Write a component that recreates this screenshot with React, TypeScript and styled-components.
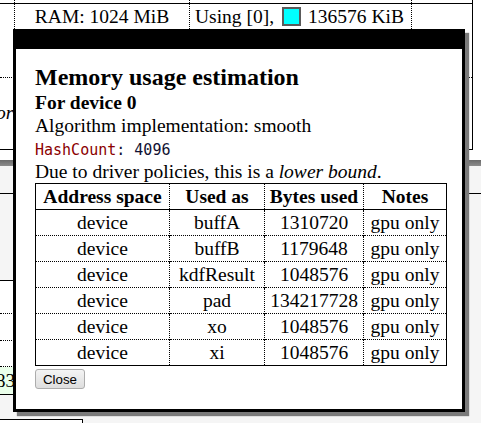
import React from 'react';
import styled, { createGlobalStyle } from 'styled-components';

const Global = createGlobalStyle`
  html, body { margin: 0; padding: 0; background: #fff; }
  body {
    font-family: "Liberation Serif", "Times New Roman", serif;
    font-size: 19.5px;
    color: #000;
    overflow: hidden;
  }
`;

const Page = styled.div`
  position: relative;
  width: 481px;
  height: 423px;
  overflow: hidden;
  background: #f5f5f5;
`;

const TopArea = styled.div`
  background: #fff;
  padding-bottom: 10px;
`;

const TopTable = styled.div`
  width: 472px;
  border-right: 1px solid #000;
  border-bottom: 1px solid #000;
`;

const Row = styled.div<{ $h: number; $bottom?: 'solid' | 'dotted' | 'none' }>`
  display: grid;
  grid-template-columns: 15px 175px 222px 1fr;
  height: ${(p) => p.$h}px;
  border-bottom: ${(p) => (p.$bottom === 'none' || !p.$bottom ? '0' : `1px ${p.$bottom} #000`)};
  line-height: 25px;
  white-space: nowrap;
`;

const Cell = styled.div<{ $align?: string; $last?: boolean }>`
  border-right: ${(p) => (p.$last ? '0' : '1px dotted #000')};
  text-align: ${(p) => p.$align || 'left'};
  padding: 0 5px;
  overflow: hidden;
  display: flex;
  align-items: center;
  justify-content: ${(p) => (p.$align === 'center' ? 'center' : 'flex-start')};
  gap: 7px;
`;

const WideCell = styled.div`
  grid-column: 1 / -1;
  padding-top: 22px;
  padding-left: 0;
  font-style: italic;
  text-indent: -4px;
`;

const Swatch = styled.span`
  display: inline-block;
  width: 15px;
  height: 15px;
  margin-left: 1px;
  background: #00ffff;
  border: 2px solid #5a5a5a;
`;

const Band = styled.div`
  height: 6px;
  background: linear-gradient(#6a6a6a, #8c8c8c);
`;

const Gray = styled.div<{ $h: number; $line?: boolean }>`
  height: ${(p) => p.$h}px;
  border-bottom: ${(p) => (p.$line ? '1px solid #000' : '0')};
`;

const LowerTable = styled.div`
  width: 300px;
  background: #fff;
  border-top: 1px solid #000;
  border-bottom: 1px solid #000;
  border-right: 1px solid #000;
`;

const LowerRow = styled.div<{ $h: number; $green?: boolean; $last?: boolean }>`
  height: ${(p) => p.$h}px;
  border-bottom: ${(p) => (p.$last ? '0' : '1px dotted #000')};
  background: ${(p) => (p.$green ? '#eaffea' : '#fff')};
  line-height: ${(p) => p.$h}px;
  text-indent: -14px;
  white-space: nowrap;
`;

const FootBox = styled.div`
  margin-top: 24px;
  width: 82px;
  height: 20px;
  border-top: 1px solid #000;
  border-right: 1px solid #000;
  background: #fff;
`;

const Overlay = styled.div`
  position: absolute;
  left: 13px;
  top: 29px;
  width: 452px;
  box-sizing: border-box;
  background: #fff;
  border: 3px solid #000;
  border-top: 0;
  box-shadow: 4px 4px 1px #7a7a7a;
`;

const TitleBar = styled.div`
  height: 20px;
  background: #000;
`;

const Body = styled.div`
  padding: 15px 20px 20px 19px;
`;

const Title = styled.h2`
  margin: 0;
  font-size: 24px;
  font-weight: bold;
  line-height: 27px;
`;

const Sub = styled.h3`
  margin: 0;
  font-size: 19.5px;
  font-weight: bold;
  line-height: 23px;
`;

const Para = styled.div<{ $lh: number }>`
  line-height: ${(p) => p.$lh}px;
`;

const Code = styled.span<{ $c: string }>`
  font-family: "DejaVu Sans Mono", "Liberation Mono", monospace;
  font-size: 15px;
  color: ${(p) => p.$c};
`;

const Table = styled.table`
  margin-top: 0;
  width: 100%;
  border-collapse: collapse;
  border: 1px solid #000;
  table-layout: fixed;
`;

const Th = styled.th<{ $w: number }>`
  width: ${(p) => p.$w}px;
  height: 25px;
  padding: 0;
  font-weight: bold;
  text-align: center;
  border-left: 1px dotted #000;
  border-bottom: 1px solid #000;
  line-height: 22px;
  white-space: nowrap;
`;

const Td = styled.td`
  height: 25px;
  padding: 0;
  text-align: center;
  border-left: 1px dotted #000;
  border-top: 1px dotted #000;
  line-height: 22px;
  white-space: nowrap;
`;

const CloseButton = styled.button`
  margin-top: 3px;
  width: 50px;
  height: 20px;
  padding: 0;
  font-family: "Liberation Sans", Arial, sans-serif;
  font-size: 13.3px;
  color: #000;
  background: linear-gradient(#f4f4f4, #dedede);
  border: 1px solid #acacac;
  border-radius: 3px;
  display: block;
`;

const rows = [
  ['device', 'buffA', '1310720', 'gpu only'],
  ['device', 'buffB', '1179648', 'gpu only'],
  ['device', 'kdfResult', '1048576', 'gpu only'],
  ['device', 'pad', '134217728', 'gpu only'],
  ['device', 'xo', '1048576', 'gpu only'],
  ['device', 'xi', '1048576', 'gpu only'],
];

export default function App() {
  return (
    <Page>
      <Global />
      <TopArea>
        <TopTable>
          <Row $h={3} $bottom="solid">
            <Cell />
            <Cell />
            <Cell />
            <Cell $last />
          </Row>
          <Row $h={25} $bottom="none">
            <Cell />
            <Cell $align="center">RAM: 1024 MiB</Cell>
            <Cell>
              Using [0], <Swatch /> 136576 KiB
            </Cell>
            <Cell $last />
          </Row>
          <Row $h={48} $bottom="dotted">
            <Cell $last />
          </Row>
          <Row $h={71} $bottom="none">
            <WideCell>or</WideCell>
          </Row>
        </TopTable>
      </TopArea>
      <Band />
      <Gray $h={27} $line />
      <Gray $h={86} />
      <LowerTable>
        <LowerRow $h={32} />
        <LowerRow $h={26} />
        <LowerRow $h={25} />
        <LowerRow $h={27} $green $last>
          1833
        </LowerRow>
      </LowerTable>
      <FootBox />

      <Overlay>
        <TitleBar />
        <Body>
          <Title>Memory usage estimation</Title>
          <Sub>For device 0</Sub>
          <Para $lh={24}>Algorithm implementation: smooth</Para>
          <Para $lh={21}>
            <Code $c="#8b0000">HashCount</Code>
            <Code $c="#111133">: 4096</Code>
          </Para>
          <Para $lh={22}>
            Due to driver policies, this is a <i>lower bound</i>.
          </Para>
          <Table>
            <thead>
              <tr>
                <Th $w={133}>Address space</Th>
                <Th $w={94}>Used as</Th>
                <Th $w={98}>Bytes used</Th>
                <Th $w={82}>Notes</Th>
              </tr>
            </thead>
            <tbody>
              {rows.map((r, i) => (
                <tr key={i}>
                  {r.map((c, j) => (
                    <Td key={j}>{c}</Td>
                  ))}
                </tr>
              ))}
            </tbody>
          </Table>
          <CloseButton>Close</CloseButton>
        </Body>
      </Overlay>
    </Page>
  );
}
